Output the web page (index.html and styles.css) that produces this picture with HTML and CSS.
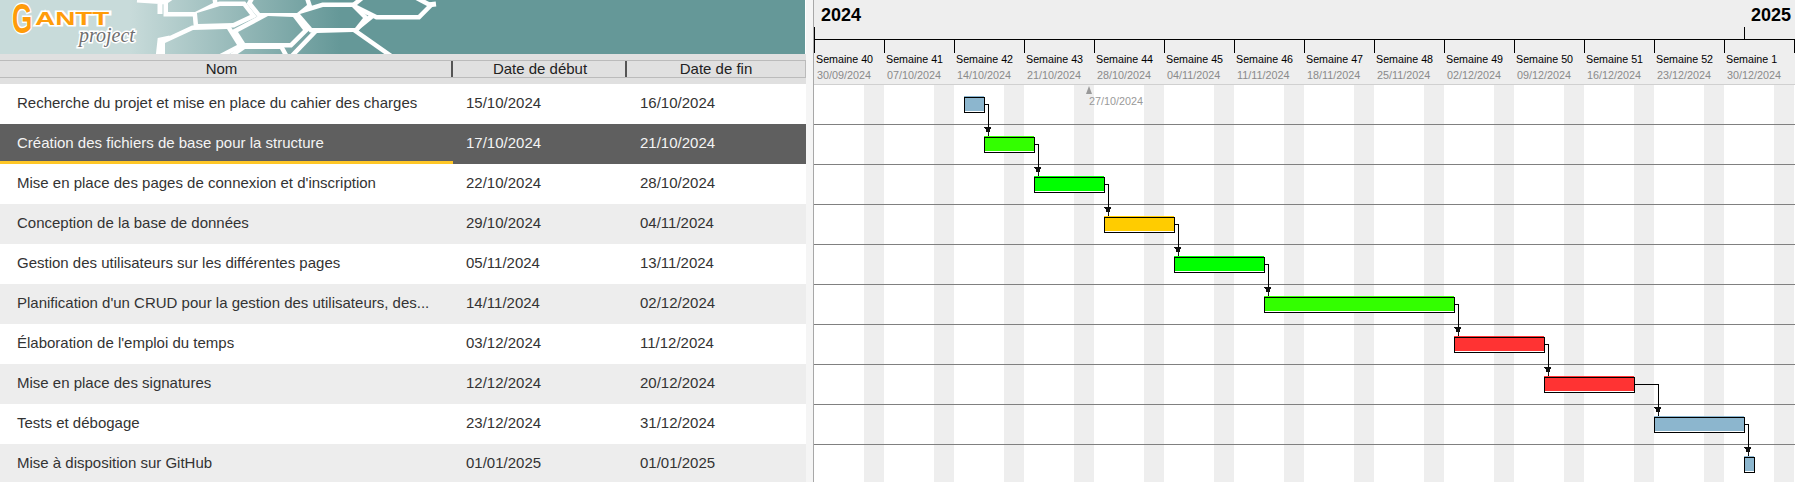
FILE: index.html
```html
<!DOCTYPE html>
<html lang="fr">
<head>
<meta charset="utf-8">
<title>GanttProject</title>
<link rel="stylesheet" href="styles.css">
</head>
<body>
<div class="page">
  <section class="tasks">
    <div class="banner">
      <svg class="banner-art" width="805" height="54" viewBox="0 0 805 54" aria-hidden="true">
        <defs>
          <linearGradient id="sky" gradientUnits="userSpaceOnUse" x1="130" y1="0" x2="340" y2="0">
            <stop offset="0" stop-color="#c8dbda"/>
            <stop offset="1" stop-color="#659898"/>
          </linearGradient>
          <g id="cells">
            <polygon points="165,43 193,30 227,29 237,45 212,58 165,58"/>
            <polygon points="245,43 238,32 268,16 293,17 303,30 290,43"/>
            <polygon points="312,28 300,14 323,7 352,7 363,18 355,28"/>
            <polygon points="260,13 252,3 256,-4 304,-4 307,5 297,13"/>
            <polygon points="198,24 197,13 220,6 243,6 250,15 233,23"/>
            <polygon points="168,12 168,3 178,-4 212,-4 213,3 195,12"/>
            <polygon points="377,15 357,5 368,-4 408,-4 427,6 418,15"/>
            <polygon points="293,58 317,33 353,32 390,58"/>
            <polygon points="245,49 280,49 285,58 232,58"/>
          </g>
        </defs>
        <rect class="sky" width="805" height="54"/>
        <use href="#cells" class="web"/>
        <path class="web-line" d="M137 0L167 2M356 29L372 16M427 5L436 4M158 58L160 40L170 38M160 3V14"/>
        <use href="#cells" class="sky"/>
      </svg>
      <div class="logo">
        <span class="logo-g">G</span>
        <span class="logo-antt">ANTT</span>
        <span class="logo-project">project</span>
      </div>
    </div>
    <div class="table-head">
      <div class="head-cells">
        <div class="head-cell head-name">Nom</div>
        <div class="head-cell">Date de début</div>
        <div class="head-cell head-end">Date de fin</div>
      </div>
    </div>
    <div class="row"><span class="cell-name">Recherche du projet et mise en place du cahier des charges</span><span class="cell">15/10/2024</span><span class="cell">16/10/2024</span></div>
    <div class="row selected"><span class="cell-name">Création des fichiers de base pour la structure</span><span class="cell">17/10/2024</span><span class="cell">21/10/2024</span></div>
    <div class="row"><span class="cell-name">Mise en place des pages de connexion et d'inscription</span><span class="cell">22/10/2024</span><span class="cell">28/10/2024</span></div>
    <div class="row alt"><span class="cell-name">Conception de la base de données</span><span class="cell">29/10/2024</span><span class="cell">04/11/2024</span></div>
    <div class="row"><span class="cell-name">Gestion des utilisateurs sur les différentes pages</span><span class="cell">05/11/2024</span><span class="cell">13/11/2024</span></div>
    <div class="row alt"><span class="cell-name">Planification d'un CRUD pour la gestion des utilisateurs, des...</span><span class="cell">14/11/2024</span><span class="cell">02/12/2024</span></div>
    <div class="row"><span class="cell-name">Élaboration de l'emploi du temps</span><span class="cell">03/12/2024</span><span class="cell">11/12/2024</span></div>
    <div class="row alt"><span class="cell-name">Mise en place des signatures</span><span class="cell">12/12/2024</span><span class="cell">20/12/2024</span></div>
    <div class="row"><span class="cell-name">Tests et débogage</span><span class="cell">23/12/2024</span><span class="cell">31/12/2024</span></div>
    <div class="row alt"><span class="cell-name">Mise à disposition sur GitHub</span><span class="cell">01/01/2025</span><span class="cell">01/01/2025</span></div>
  </section>

  <section class="chart">
    <header class="timeline">
      <div class="years">
        <div class="year year-2024"><span class="year-label">2024</span><i class="year-tick"></i></div>
        <div class="year year-2025"><span class="year-label">2025</span><i class="year-tick"></i></div>
      </div>
      <div class="weeks">
        <div class="week"><span class="week-name">Semaine 40</span><span class="week-date">30/09/2024</span></div>
        <div class="week"><span class="week-name">Semaine 41</span><span class="week-date">07/10/2024</span></div>
        <div class="week"><span class="week-name">Semaine 42</span><span class="week-date">14/10/2024</span></div>
        <div class="week"><span class="week-name">Semaine 43</span><span class="week-date">21/10/2024</span></div>
        <div class="week"><span class="week-name">Semaine 44</span><span class="week-date">28/10/2024</span></div>
        <div class="week"><span class="week-name">Semaine 45</span><span class="week-date">04/11/2024</span></div>
        <div class="week"><span class="week-name">Semaine 46</span><span class="week-date">11/11/2024</span></div>
        <div class="week"><span class="week-name">Semaine 47</span><span class="week-date">18/11/2024</span></div>
        <div class="week"><span class="week-name">Semaine 48</span><span class="week-date">25/11/2024</span></div>
        <div class="week"><span class="week-name">Semaine 49</span><span class="week-date">02/12/2024</span></div>
        <div class="week"><span class="week-name">Semaine 50</span><span class="week-date">09/12/2024</span></div>
        <div class="week"><span class="week-name">Semaine 51</span><span class="week-date">16/12/2024</span></div>
        <div class="week"><span class="week-name">Semaine 52</span><span class="week-date">23/12/2024</span></div>
        <div class="week"><span class="week-name">Semaine 1</span><span class="week-date">30/12/2024</span></div>
        <div class="week week-end"></div>
      </div>
    </header>
    <div class="plot">
      <div class="plot-row"></div><div class="plot-row"></div><div class="plot-row"></div><div class="plot-row"></div><div class="plot-row"></div>
      <div class="plot-row"></div><div class="plot-row"></div><div class="plot-row"></div><div class="plot-row"></div><div class="plot-row"></div>
      <div class="today">
        <i class="today-mark"></i>
        <span class="today-label">27/10/2024</span>
      </div>
      <svg class="plot-art" width="981" height="397" viewBox="814 85 981 397" aria-hidden="true">
        <defs>
          <path id="head" d="M-4 0H3V2H2V5H1V8H0V5H-2V2H-3V1H-4Z"/>
        </defs>
        <g class="links">
          <path d="M984 104.5H988.5V137"/>
          <path d="M1034 144.5H1038.5V177"/>
          <path d="M1104 184.5H1108.5V217"/>
          <path d="M1174 224.5H1178.5V257"/>
          <path d="M1264 264.5H1268.5V297"/>
          <path d="M1454 304.5H1458.5V337"/>
          <path d="M1544 344.5H1548.5V377"/>
          <path d="M1634 384.5H1658.5V417"/>
          <path d="M1744 424.5H1748.5V457"/>
        </g>
        <g class="heads">
          <use href="#head" x="988" y="127"/>
          <use href="#head" x="1038" y="167"/>
          <use href="#head" x="1108" y="207"/>
          <use href="#head" x="1178" y="247"/>
          <use href="#head" x="1268" y="287"/>
          <use href="#head" x="1458" y="327"/>
          <use href="#head" x="1548" y="367"/>
          <use href="#head" x="1658" y="407"/>
          <use href="#head" x="1748" y="447"/>
        </g>
        <g class="bar">
          <rect class="under" x="964" y="97" width="20" height="15"/><rect class="fill-blue" x="964" y="96" width="20" height="15"/><rect class="edge" x="964.5" y="97.5" width="20" height="15"/>
        </g>
        <g class="bar">
          <rect class="under" x="984" y="137" width="50" height="15"/><rect class="fill-lime" x="984" y="136" width="50" height="15"/><rect class="edge" x="984.5" y="137.5" width="50" height="15"/>
        </g>
        <g class="bar">
          <rect class="under" x="1034" y="177" width="70" height="15"/><rect class="fill-green" x="1034" y="176" width="70" height="15"/><rect class="edge" x="1034.5" y="177.5" width="70" height="15"/>
        </g>
        <g class="bar">
          <rect class="under" x="1104" y="217" width="70" height="15"/><rect class="fill-amber" x="1104" y="216" width="70" height="15"/><rect class="edge" x="1104.5" y="217.5" width="70" height="15"/>
        </g>
        <g class="bar">
          <rect class="under" x="1174" y="257" width="90" height="15"/><rect class="fill-green" x="1174" y="256" width="90" height="15"/><rect class="edge" x="1174.5" y="257.5" width="90" height="15"/>
        </g>
        <g class="bar">
          <rect class="under" x="1264" y="297" width="190" height="15"/><rect class="fill-lime" x="1264" y="296" width="190" height="15"/><rect class="edge" x="1264.5" y="297.5" width="190" height="15"/>
        </g>
        <g class="bar">
          <rect class="under" x="1454" y="337" width="90" height="15"/><rect class="fill-red" x="1454" y="336" width="90" height="15"/><rect class="edge" x="1454.5" y="337.5" width="90" height="15"/>
        </g>
        <g class="bar">
          <rect class="under" x="1544" y="377" width="90" height="15"/><rect class="fill-red" x="1544" y="376" width="90" height="15"/><rect class="edge" x="1544.5" y="377.5" width="90" height="15"/>
        </g>
        <g class="bar">
          <rect class="under" x="1654" y="417" width="90" height="15"/><rect class="fill-blue" x="1654" y="416" width="90" height="15"/><rect class="edge" x="1654.5" y="417.5" width="90" height="15"/>
        </g>
        <g class="bar">
          <rect class="under" x="1744" y="457" width="10" height="15"/><rect class="fill-blue" x="1744" y="456" width="10" height="15"/><rect class="edge" x="1744.5" y="457.5" width="10" height="15"/>
        </g>
      </svg>
    </div>
  </section>
</div>
</body>
</html>
```

FILE: styles.css
```css
* { box-sizing: border-box; }

html, body {
  margin: 0;
  height: 482px;
  overflow: hidden;
  background: #fff;
}

.page {
  display: flex;
  width: 1795px;
  height: 482px;
  overflow: hidden;
  font-family: "Liberation Sans", Arial, sans-serif;
  background: #f5f5f5;
}

/* Task table */
.tasks {
  flex: 0 0 805px;
  height: 484px;
  background: #fff;
}

.banner {
  position: relative;
  height: 54px;
}

.banner-art { display: block; }
.sky { fill: url(#sky); }
.web { fill: #fff; stroke: #fff; stroke-width: 9; stroke-linejoin: miter; }
.web-line { fill: none; stroke: #fff; stroke-width: 5; }

.logo {
  position: absolute;
  left: 0;
  top: 0;
  width: 140px;
  height: 54px;
}

.logo span {
  position: absolute;
  white-space: nowrap;
  paint-order: stroke fill;
}

.logo-g {
  left: 12px;
  top: 1px;
  font-size: 42px;
  line-height: 36px;
  font-weight: 700;
  color: #ff9c0a;
  -webkit-text-stroke: 3px #fff;
  transform: scaleX(.62);
  transform-origin: left center;
}

.logo-antt {
  left: 35px;
  top: 9px;
  font-size: 18px;
  line-height: 20px;
  font-weight: 700;
  color: #ff9c0a;
  -webkit-text-stroke: 3px #fff;
  transform: scaleX(1.55);
  transform-origin: left center;
}

.logo-project {
  left: 79px;
  top: 24px;
  font-family: "Liberation Serif", "Times New Roman", serif;
  font-style: italic;
  font-size: 20px;
  line-height: 22px;
  color: #6f6f6f;
  -webkit-text-stroke: 3px #fff;
}

.table-head {
  height: 30px;
  padding: 6px 0 6px;
  background: #e0e0e0;
}

.head-cells {
  display: grid;
  grid-template-columns: 451px 174px 180px;
  height: 18px;
  border-top: 1px solid #bbb;
  border-bottom: 1px solid #bbb;
  border-right: 1px solid #bbb;
}

.head-cell {
  padding-left: 2px;
  font-size: 15px;
  line-height: 16px;
  text-align: center;
  color: #222;
  border-left: 2px solid #555;
}

.head-name {
  border-left: 0;
  padding-left: 0;
  padding-right: 8px;
}

.head-end {
  padding-left: 0;
}

.row {
  display: grid;
  grid-template-columns: 451px 174px 180px;
  align-items: center;
  height: 40px;
  padding-bottom: 3px;
  font-size: 15px;
  color: #333;
}

.row span { padding-left: 15px; white-space: nowrap; }
.row .cell-name { padding-left: 17px; }
.row.alt { background: #ededed; }
.row.selected {
  background: #5f5f5f;
  color: #f4f4f4;
  background-image: linear-gradient(#ffc726, #ffc726);
  background-size: 453px 3px;
  background-position: 0 100%;
  background-repeat: no-repeat;
}

/* Chart */
.chart {
  flex: 0 0 983px;
  margin-left: 7px;
  height: 482px;
  border-left: 1px solid #a8a8a8;
  background: #fff;
}

.timeline {
  height: 85px;
  background: #eee;
  border-bottom: 1px solid #d0d0d0;
}

.years {
  display: flex;
  height: 40px;
  border-bottom: 1px solid #000;
}

.year {
  display: flex;
  flex-direction: column;
  justify-content: space-between;
  height: 39px;
}

.year-2024 { flex: 0 0 930px; }
.year-2025 { flex: 1; }

.year-label {
  padding: 5px 0 0 7px;
  font-size: 18px;
  line-height: 20px;
  font-weight: 700;
  color: #000;
}

.year-tick {
  display: block;
  width: 1px;
  height: 12px;
  background: #000;
}

.weeks { display: flex; height: 44px; }

.week {
  flex: 0 0 70px;
  display: flex;
  flex-direction: column;
  padding-left: 2px;
  position: relative;
  white-space: nowrap;
}

.week::before {
  content: "";
  position: absolute;
  left: 0;
  top: 0;
  width: 1px;
  height: 13px;
  background: #000;
}

.week-end { flex: 0 0 1px; }

.week-name {
  margin-top: 11px;
  font-size: 10.7px;
  line-height: 16px;
  color: #000;
}

.week-date {
  padding-left: 1px;
  font-size: 10.8px;
  line-height: 16px;
  color: #8a8a8a;
}

.plot {
  position: relative;
  height: 397px;
  background: repeating-linear-gradient(90deg, #fff 0, #fff 50px, #eee 50px, #eee 70px);
}

.plot-row {
  height: 40px;
  border-bottom: 1px solid #808080;
}

.plot-art {
  position: absolute;
  left: 0;
  top: 0;
}

.today {
  position: absolute;
  left: 272px;
  top: 1px;
}

.today-mark {
  display: block;
  width: 0;
  height: 0;
  border-left: 3.5px solid transparent;
  border-right: 3.5px solid transparent;
  border-bottom: 8px solid #999;
}

.today-label {
  display: block;
  margin-left: 3px;
  font-size: 10.8px;
  line-height: 14px;
  color: #999;
  white-space: nowrap;
}

.links path { fill: none; stroke: #000; stroke-width: 1; shape-rendering: crispEdges; }
.heads use { fill: #111; shape-rendering: crispEdges; }
.bar rect { shape-rendering: crispEdges; }
.bar .under { fill: #fff; }
.bar .edge { fill: none; stroke: #000; stroke-width: 1; }
.fill-blue { fill: #8cb6ce; }
.fill-lime { fill: #33ff00; }
.fill-green { fill: #00ff00; }
.fill-amber { fill: #ffcc00; }
.fill-red { fill: #ff3333; }
```
